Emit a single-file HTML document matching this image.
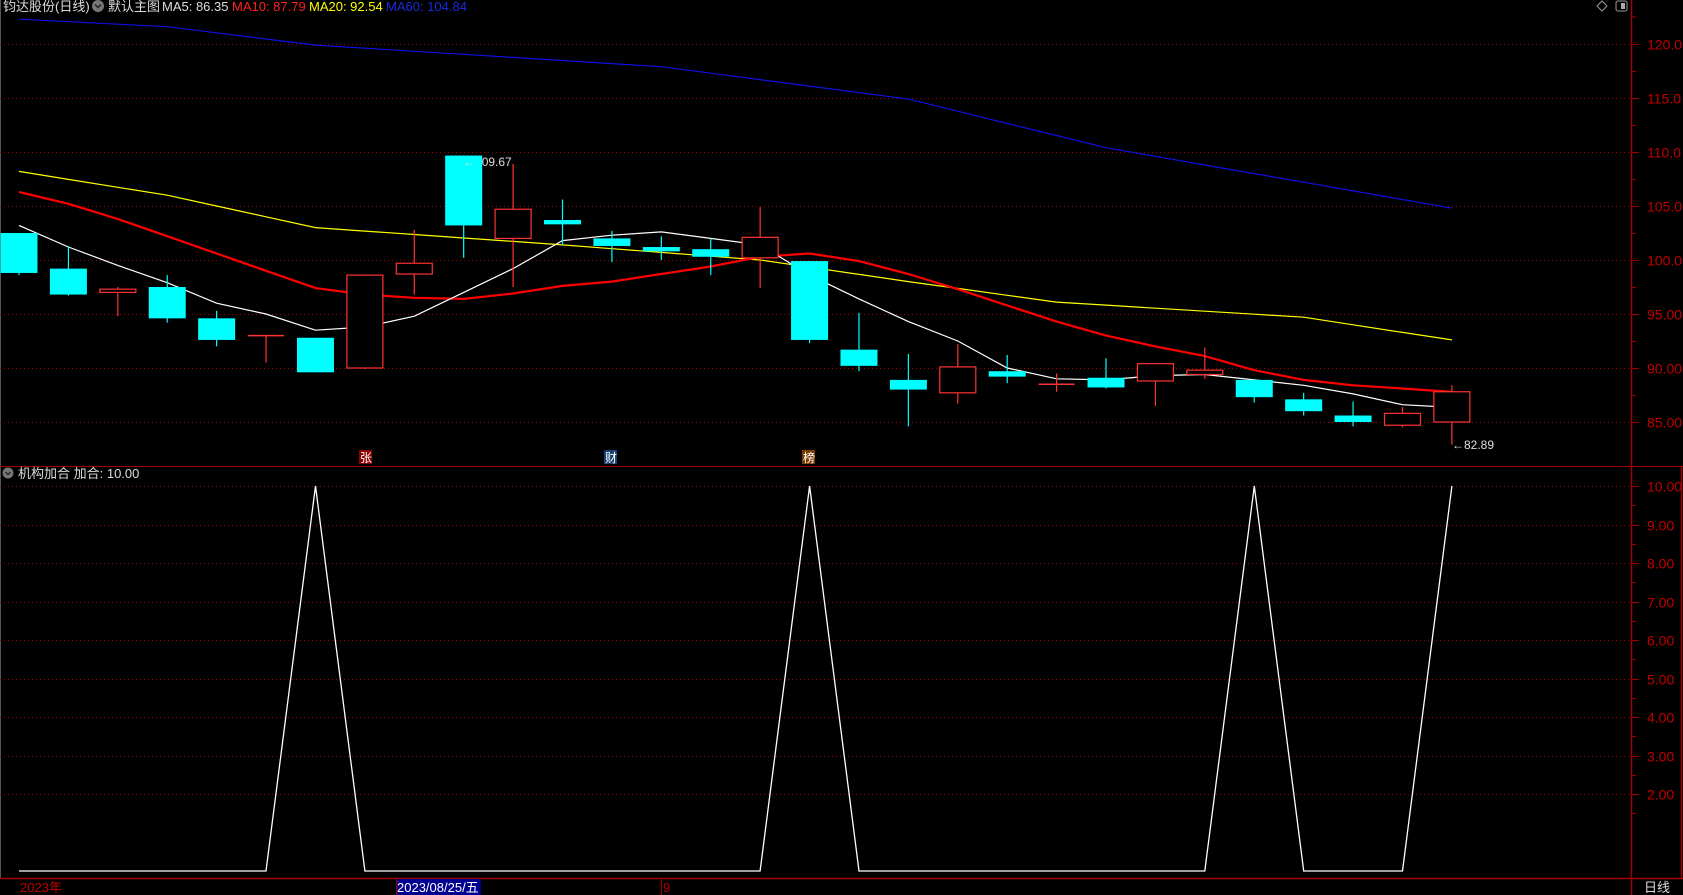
<!DOCTYPE html>
<html><head><meta charset="utf-8">
<style>
html,body{margin:0;padding:0;background:#000;width:1683px;height:895px;overflow:hidden}
svg{position:absolute;left:0;top:0}
.t{font-family:"Liberation Sans","Noto Sans CJK SC",sans-serif}
</style></head>
<body>
<svg id="s" width="1683" height="895" xmlns="http://www.w3.org/2000/svg">
<rect width="1683" height="895" fill="#000"/>
<line x1="0.5" y1="0" x2="0.5" y2="878" stroke="#555"/>
<g id="grid"></g>
<line x1="1631.5" y1="0" x2="1631.5" y2="895" stroke="#a00000" stroke-width="1.5"/>
<line x1="0" y1="466.5" x2="1683" y2="466.5" stroke="#a00000"/>
<line x1="1681.5" y1="466" x2="1681.5" y2="878" stroke="#a00000" stroke-width="1.5"/>
<line x1="0" y1="878.5" x2="1683" y2="878.5" stroke="#a00000" stroke-width="1.5"/>
<line x1="1631.5" y1="878" x2="1631.5" y2="895" stroke="#a00000"/>
<g id="lines"></g>
<g id="candles"></g>
<text class="t" x="463" y="166" fill="#ddd" font-size="12">←<tspan fill="#00ffff">1</tspan>09.67</text>
<text class="t" x="1452" y="449" fill="#ddd" font-size="12">←82.89</text>
<rect x="359" y="450" width="13" height="14" fill="#8b0000"/><text class="t" x="360" y="462" fill="#fff" font-size="12">张</text>
<rect x="604" y="450" width="13" height="14" fill="#1a3f70"/><text class="t" x="605" y="462" fill="#fff" font-size="12">财</text>
<rect x="802" y="450" width="13" height="14" fill="#7a3a00"/><text class="t" x="803" y="462" fill="#fff" font-size="12">榜</text>
<text class="t" y="11" font-size="13" fill="#ddd"><tspan x="3">钧达股份(日线)</tspan></text>
<circle cx="98" cy="6" r="6" fill="#777"/><path d="M95 4.5 L98 7.5 L101 4.5" stroke="#222" stroke-width="1.5" fill="none"/>
<text class="t" y="11" font-size="13"><tspan x="108" fill="#ddd">默认主图</tspan><tspan x="162" fill="#ddd">MA5: 86.35</tspan><tspan x="232" fill="#ff2020">MA10: 87.79</tspan><tspan x="309" fill="#ffff00">MA20: 92.54</tspan><tspan x="386" fill="#1a2ae0">MA60: 104.84</tspan></text>
<path d="M1602 1 L1607 6 L1602 11 L1597 6 Z" stroke="#999" fill="none"/>
<rect x="1616" y="1" width="11" height="10" rx="2" stroke="#999" fill="none"/><rect x="1621" y="3" width="4" height="6" fill="#aaa"/>
<circle cx="8" cy="473" r="5.5" fill="#777"/><path d="M5.5 472 L8 474.5 L10.5 472" stroke="#222" stroke-width="1.3" fill="none"/>
<text class="t" x="18" y="478" font-size="13" fill="#ddd">机构加合 加合: 10.00</text>
<text class="t" x="20" y="892" font-size="13" fill="#c00000">2023年</text>
<rect x="396" y="879" width="85" height="16" fill="#000090"/>
<line x1="396.5" y1="879" x2="396.5" y2="895" stroke="#a00000"/>
<text class="t" x="397" y="892" font-size="13" fill="#fff">2023/08/25/五</text>
<line x1="661.5" y1="879" x2="661.5" y2="895" stroke="#a00000"/>
<text class="t" x="663" y="892" font-size="13" fill="#c00000">9</text>
<text class="t" x="1644" y="892" font-size="13" fill="#ddd">日线</text>
</svg>
<script>
var NS="http://www.w3.org/2000/svg";
function el(p,t,a,txt){var e=document.createElementNS(NS,t);for(var k in a)e.setAttribute(k,a[k]);if(txt)e.textContent=txt;p.appendChild(e);return e;}
var g=document.getElementById('grid'),L=document.getElementById('lines'),C=document.getElementById('candles');
function py(p){return 44+(120-p)*10.8;}
function ly(v){return 486+(10-v)*38.5;}
var labs=[[120,"120.0"],[115,"115.0"],[110,"110.0"],[105,"105.0"],[100,"100.0"],[95,"95.00"],[90,"90.00"],[85,"85.00"]];
labs.forEach(function(l){var y=Math.round(py(l[0]))+0.5;
 el(g,'line',{x1:0,y1:y,x2:1631,y2:y,stroke:'#9a0000','stroke-dasharray':'1,3'});
 el(g,'line',{x1:1631,y1:y,x2:1639,y2:y,stroke:'#a00000'});
 el(g,'text',{x:1647,y:y+5,fill:'#c00000','font-size':14,'class':'t'},l[1]);
 var y2=Math.round(py(l[0]-2.5))+0.5; if(l[0]>85) el(g,'line',{x1:1631,y1:y2,x2:1636,y2:y2,stroke:'#a00000'});
});
el(g,'line',{x1:1631,y1:py(122.5),x2:1636,y2:py(122.5),stroke:'#a00000'});
for(var v=10;v>=2;v--){var y=Math.round(ly(v))+0.5;
 el(g,'line',{x1:0,y1:y,x2:1631,y2:y,stroke:'#9a0000','stroke-dasharray':'1,3'});
 el(g,'line',{x1:1631,y1:y,x2:1639,y2:y,stroke:'#a00000'});
 el(g,'text',{x:1647,y:y+5,fill:'#c00000','font-size':14,'class':'t'},v.toFixed(2));
 var y2=Math.round(ly(v-0.5))+0.5; el(g,'line',{x1:1631,y1:y2,x2:1636,y2:y2,stroke:'#a00000'});
}
function cx(i){return 19+i*49.41;}
var K=[[102.5,98.8,102.5,98.6],[99.2,96.8,101.3,96.7],[97.0,97.3,97.5,94.8],[97.5,94.6,98.6,94.2],[94.6,92.6,95.3,92.0],[93.0,93.0,93.0,90.5],[92.8,89.6,92.8,89.6],[90.0,98.6,98.6,89.9],[98.7,99.7,102.8,96.8],[109.67,103.2,109.67,100.2],[102.0,104.7,108.9,97.5],[103.7,103.3,105.6,101.4],[102.0,101.3,102.7,99.8],[101.2,100.8,102.2,100.0],[101.0,100.3,102.0,98.6],[100.2,102.1,104.9,97.4],[99.9,92.6,99.9,92.3],[91.7,90.2,95.1,89.7],[88.9,88.0,91.3,84.6],[87.7,90.1,92.2,86.7],[89.7,89.2,91.2,88.6],[88.5,88.5,89.5,87.8],[89.1,88.2,90.9,88.1],[88.8,90.4,90.4,86.5],[89.4,89.8,91.9,89.0],[88.9,87.3,89.0,86.8],[87.1,86.0,87.7,85.6],[85.6,85.0,86.9,84.6],[84.7,85.8,86.4,84.5],[85.0,87.8,88.4,82.89]];
var ma5=[103.2,101.2,99.5,97.9,96.0,95.0,93.5,93.8,94.8,97.0,99.2,101.8,102.3,102.6,102.0,101.4,98.6,96.4,94.3,92.5,90.0,89.0,88.9,89.3,89.4,88.9,88.4,87.6,86.6,86.35];
var ma10=[106.3,105.2,103.8,102.2,100.6,99.0,97.4,96.8,96.5,96.4,96.9,97.6,98.0,98.7,99.4,100.3,100.6,99.9,98.7,97.3,95.8,94.3,93.0,92.0,91.1,89.8,88.9,88.4,88.1,87.79];
function interp(pts){var r=[];for(var i=0;i<30;i++){for(var j=0;j<pts.length-1;j++){if(i>=pts[j][0]&&i<=pts[j+1][0]){var t=(i-pts[j][0])/(pts[j+1][0]-pts[j][0]);r.push(pts[j][1]+t*(pts[j+1][1]-pts[j][1]));break;}}}return r;}
var ma20=interp([[0,108.2],[3,106.0],[6,103.0],[11,101.4],[15,100.0],[18,98.0],[21,96.1],[26,94.7],[29,92.6]]);
var ma60=interp([[0,122.3],[3,121.6],[6,119.9],[13,117.9],[18,114.9],[22,110.4],[26,107.2],[29,104.8]]);
function poly(a,col,w){var d=a.map(function(p,i){return cx(i).toFixed(1)+','+py(p).toFixed(1)}).join(' ');el(L,'polyline',{points:d,fill:'none',stroke:col,'stroke-width':w});}
poly(ma60,'#1010e0',1.2);poly(ma20,'#ffff00',1.2);poly(ma10,'#ff0000',2.2);poly(ma5,'#ffffff',1.2);
K.forEach(function(k,i){var x=cx(i),o=k[0],c=k[1],h=k[2],l=k[3];var up=c>=o;var col=up?'#ff3232':'#00ffff';
 var top=py(Math.max(o,c)),bot=py(Math.min(o,c));
 el(C,'line',{x1:x,y1:py(h),x2:x,y2:py(l),stroke:col,'stroke-width':1.2});
 if(bot-top<1.5){el(C,'line',{x1:x-18,y1:top,x2:x+18,y2:top,stroke:col,'stroke-width':1.5});}
 else if(up){el(C,'rect',{x:x-18,y:top,width:36,height:bot-top,fill:'#000',stroke:col,'stroke-width':1.2});}
 else{el(C,'rect',{x:x-18.5,y:top,width:37,height:bot-top,fill:col});}
});
var lp=[[19,0],[cx(5),0],[cx(6),10],[cx(7),0],[cx(15),0],[cx(16),10],[cx(17),0],[cx(24),0],[cx(25),10],[cx(26),0],[cx(28),0],[cx(29),10]];
el(L,'polyline',{points:lp.map(function(p){return p[0].toFixed(1)+','+ly(p[1]).toFixed(1)}).join(' '),fill:'none',stroke:'#fff','stroke-width':1.3});
</script>
</body></html>
